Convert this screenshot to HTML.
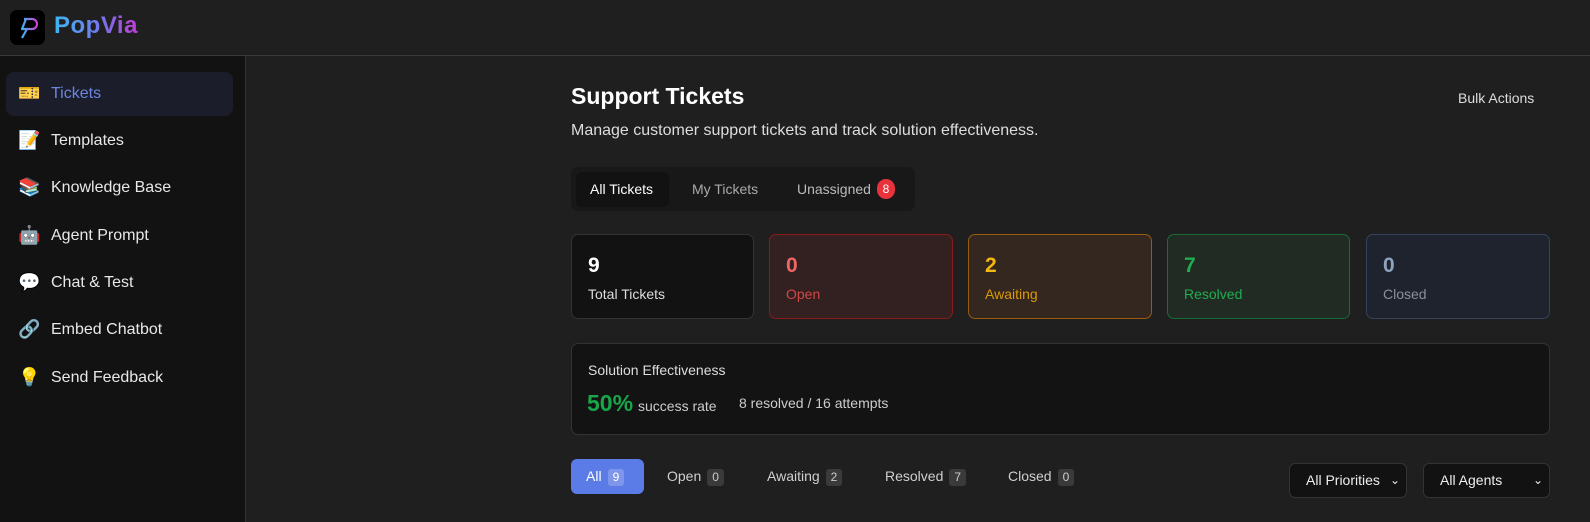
<!DOCTYPE html>
<html><head><meta charset="utf-8"><style>
*{box-sizing:border-box;margin:0;padding:0}
body{width:1590px;height:522px;overflow:hidden;background:#1f1f1f;font-family:"Liberation Sans",Arial,sans-serif;color:#e5e5e5;position:relative}
.hdr{position:absolute;left:0;top:0;width:1590px;height:56px;background:#1f1f1f;border-bottom:1px solid #3a3a3a}
.logo{position:absolute;left:10px;top:10px;width:35px;height:35px;background:#000;border-radius:7px}
.brand{position:absolute;left:54px;top:12px;font-size:24px;letter-spacing:0.5px;font-weight:bold;background:linear-gradient(90deg,#3fb4ef,#6d7df0 50%,#c13bd6);-webkit-background-clip:text;color:transparent}
.side{position:absolute;left:0;top:56px;width:246px;height:466px;background:#121212;border-right:1px solid #333}
.item{position:absolute;left:6px;width:227px;height:44px;border-radius:8px;font-size:16px;color:#e8e8e8;line-height:44px;padding-left:45px}
.item .ic{position:absolute;left:12px;top:0;font-size:18px;font-family:"DejaVu Sans",sans-serif}
.item.act{background:#1b1d2b;color:#6c86e0}
.abs{position:absolute}
.card{position:absolute;top:234px;height:85px;border-radius:7px;border:1px solid #333;padding:19px 16px}
.card b{display:block;font-size:21px;line-height:24px}
.card span{display:block;font-size:14px;margin-top:8px}
.pill{position:absolute;top:459px;height:35px;line-height:35px;font-size:14px;color:#cfcfcf}
.cnt{display:inline-block;background:#3a3a3a;border-radius:3px;font-size:12px;padding:0 5px;line-height:17px;margin-left:6px;color:#ccc}
.sel{position:absolute;top:463px;height:35px;background:#121212;border:1px solid #333;border-radius:6px;font-size:14px;color:#eee;line-height:33px;padding-left:16px}
.sel i{position:absolute;right:6px;top:0;font-style:normal;font-size:12px}
</style></head><body>
<div class="hdr">
 <div class="logo"><svg width="35" height="35" viewBox="0 0 35 35"><defs><linearGradient id="g" x1="0" x2="1"><stop offset="0" stop-color="#3fb4ef"/><stop offset="1" stop-color="#d03fd6"/></linearGradient></defs><path d="M14 9h8a5 5 0 0 1 0 10h-6M16 9l-4 10h5l-5 9" fill="none" stroke="url(#g)" stroke-width="2.2" stroke-linejoin="round"/></svg></div>
 <div class="brand">PopVia</div>
</div>
<div class="side">
 <div class="item act" style="top:16px"><span class="ic">🎫</span>Tickets</div>
 <div class="item" style="top:63px"><span class="ic">📝</span>Templates</div>
 <div class="item" style="top:110px"><span class="ic">📚</span>Knowledge Base</div>
 <div class="item" style="top:158px"><span class="ic">🤖</span>Agent Prompt</div>
 <div class="item" style="top:205px"><span class="ic">💬</span>Chat &amp; Test</div>
 <div class="item" style="top:252px"><span class="ic">🔗</span>Embed Chatbot</div>
 <div class="item" style="top:300px"><span class="ic">💡</span>Send Feedback</div>
</div>
<div class="abs" style="left:571px;top:83px;font-size:23px;font-weight:bold;color:#fff">Support Tickets</div>
<div class="abs" style="left:1458px;top:90px;font-size:14px;color:#ddd">Bulk Actions</div>
<div class="abs" style="left:571px;top:122px;font-size:16px;color:#ddd">Manage customer support tickets and track solution effectiveness.</div>
<div class="abs" style="left:571px;top:167px;width:344px;height:44px;background:#181818;border-radius:7px"></div>
<div class="abs" style="left:576px;top:172px;width:93px;height:35px;background:#121212;border-radius:6px"></div>
<div class="abs" style="left:590px;top:181px;font-size:14px;color:#fff">All Tickets</div>
<div class="abs" style="left:692px;top:181px;font-size:14px;color:#aaa">My Tickets</div>
<div class="abs" style="left:797px;top:181px;font-size:14px;color:#bbb">Unassigned</div>
<div class="abs" style="left:877px;top:179px;width:18px;height:20px;border-radius:10px;background:#e8323c;color:#fff;font-size:12px;text-align:center;line-height:20px">8</div>
<div class="card" style="left:571px;width:183px;background:#121212;border-color:#333"><b style="color:#fff">9</b><span style="color:#ddd">Total Tickets</span></div>
<div class="card" style="left:769px;width:184px;background:#332020;border-color:#8b1a1a"><b style="color:#f06565">0</b><span style="color:#d04848">Open</span></div>
<div class="card" style="left:968px;width:184px;background:#33271f;border-color:#9a5a10"><b style="color:#f5b90d">2</b><span style="color:#d99a0a">Awaiting</span></div>
<div class="card" style="left:1167px;width:183px;background:#212a23;border-color:#176c33"><b style="color:#1fae4f">7</b><span style="color:#1fae4f">Resolved</span></div>
<div class="card" style="left:1366px;width:184px;background:#1e232e;border-color:#34435a"><b style="color:#8ea3bd">0</b><span style="color:#8a8f98">Closed</span></div>
<div class="abs" style="left:571px;top:343px;width:979px;height:92px;background:#131313;border:1px solid #333;border-radius:7px"></div>
<div class="abs" style="left:588px;top:362px;font-size:14px;color:#ddd">Solution Effectiveness</div>
<div class="abs" style="left:587px;top:390px;font-size:23px;font-weight:bold;color:#19a64a">50%</div>
<div class="abs" style="left:638px;top:398px;font-size:14px;color:#ccc">success rate</div>
<div class="abs" style="left:739px;top:395px;font-size:14px;color:#ccc">8 resolved / 16 attempts</div>
<div class="pill" style="left:571px;width:73px;background:#5b7be6;border-radius:6px;color:#fff;padding-left:15px">All<span class="cnt" style="background:#7e97ec;color:#fff">9</span></div>
<div class="pill" style="left:667px">Open<span class="cnt">0</span></div>
<div class="pill" style="left:767px">Awaiting<span class="cnt">2</span></div>
<div class="pill" style="left:885px">Resolved<span class="cnt">7</span></div>
<div class="pill" style="left:1008px">Closed<span class="cnt">0</span></div>
<div class="sel" style="left:1289px;width:118px">All Priorities<i>⌄</i></div>
<div class="sel" style="left:1423px;width:127px">All Agents<i>⌄</i></div>
</body></html>
